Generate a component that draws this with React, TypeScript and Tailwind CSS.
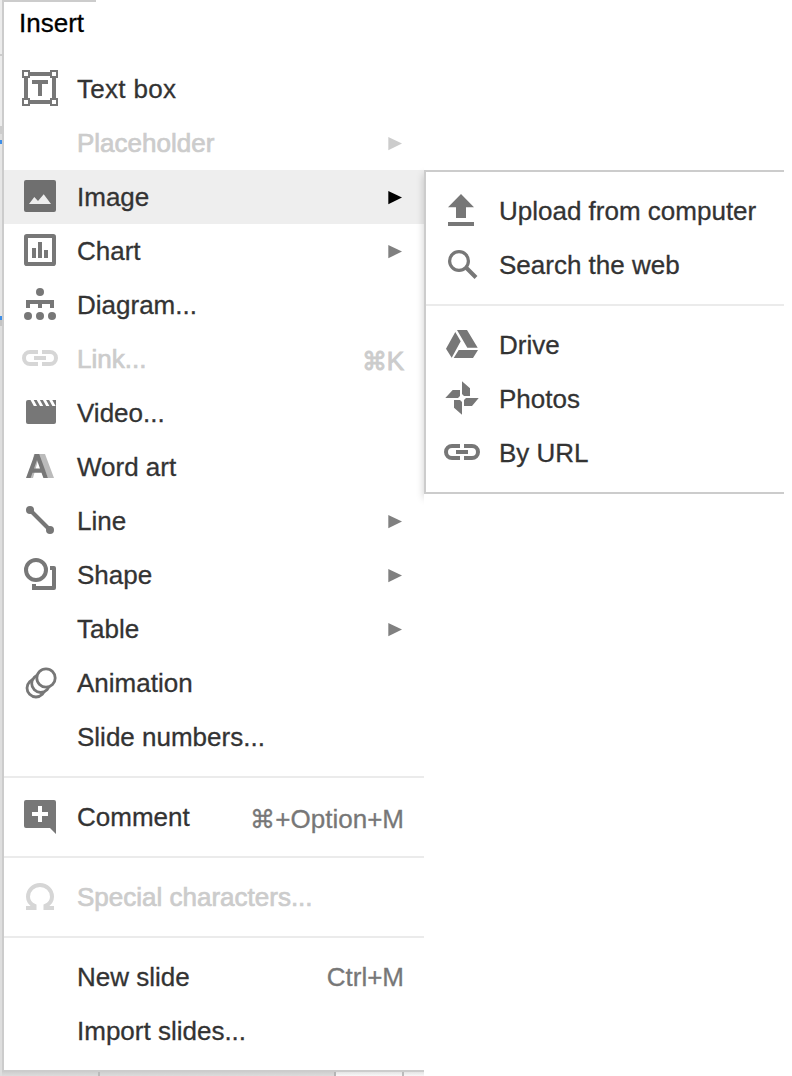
import type { ReactNode } from "react";

const LinkShape = () => (
  <>
    <path d="M16 12H8a6 6 0 0 0 0 12h8M20 12h8a6 6 0 0 1 0 12h-8" fill="none" stroke="currentColor" strokeWidth="4" />
    <path d="M12 16h12v4H12z" />
  </>
);

const icons: Record<string, ReactNode> = {
  textBox: (
    <>
      <path d="M4 4h28v28H4z" fill="none" stroke="currentColor" strokeWidth="4" />
      {[1, 29].map((x) =>
        [1, 29].map((y) => (
          <rect key={`${x}-${y}`} x={x} y={y} width="6" height="6" fill="white" stroke="currentColor" strokeWidth="2" />
        )),
      )}
      <path d="M10 10h16v4h-6v12h-4V14h-6z" />
    </>
  ),
  image: (
    <path fillRule="evenodd" d="M4 2h28a2 2 0 0 1 2 2v28a2 2 0 0 1-2 2H4a2 2 0 0 1-2-2V4a2 2 0 0 1 2-2zM7 26h22l-7.3-9.7L16 23l-3.7-4z" />
  ),
  chart: (
    <>
      <rect x="4" y="4" width="28" height="28" rx="0.8" fill="none" stroke="currentColor" strokeWidth="4" />
      <path d="M10 16h4v10h-4zM16 10h4v16h-4zM22 18h4v8h-4z" />
    </>
  ),
  diagram: (
    <>
      <circle cx="18" cy="6" r="4" />
      <circle cx="6" cy="30" r="4" />
      <circle cx="18" cy="30" r="4" />
      <circle cx="30" cy="30" r="4" />
      <path d="M4 14h28v8h-4v-4h-8v4h-4v-4H8v4H4z" />
    </>
  ),
  link: <LinkShape />,
  video: (
    <>
      <path d="M6 6h28v22a2 2 0 0 1-2 2H6a2 2 0 0 1-2-2V8a2 2 0 0 1 2-2z" />
      <path d="M8.500 6h3.200l3.300 6h-3.200zM14.700 6h3.200l3.300 6H18zM20.900 6h3.200l3.300 6h-3.200zM27.100 6h3.200l3.300 6h-3.200z" fill="white" />
    </>
  ),
  wordArt: (
    <>
      <path d="M12 6h11l9 24h-6L17 9l-6 21H8z" fill="#bbb" />
      <path fillRule="evenodd" d="M4 30 12.8 6h4.4L26 30h-4.6l-1.9-5.3h-9L8.6 30zM12 20.5h6L15 12z" />
    </>
  ),
  line: (
    <>
      <path d="M8 8l20 20" stroke="currentColor" strokeWidth="4" />
      <circle cx="8" cy="8" r="4" />
      <circle cx="28" cy="28" r="4" />
    </>
  ),
  shape: (
    <g fill="none" stroke="currentColor" strokeWidth="4">
      <circle cx="14" cy="14" r="10" />
      <path d="M28 12h4v20H10M12 32v-4" strokeLinejoin="round" />
    </g>
  ),
  animation: (
    <g fill="white" stroke="currentColor" strokeWidth="2.8">
      <circle cx="14" cy="24" r="9" />
      <circle cx="18.7" cy="19.5" r="9" />
      <circle cx="24" cy="14" r="9.2" />
    </g>
  ),
  comment: (
    <path fillRule="evenodd" d="M4 2h28a2 2 0 0 1 2 2v32l-6-6H4a2 2 0 0 1-2-2V4a2 2 0 0 1 2-2zM16 8v6h-6v4h6v6h4v-6h6v-4h-6V8z" />
  ),
  omega: (
    <path
      d="M4 30h8.5v-2.2C8.500 26 6 22.500 6 18.700a12 11.700 0 0 1 24 0C30 22.500 27.500 26 23.500 27.800V30H32"
      fill="none"
      stroke="currentColor"
      strokeWidth="4"
    />
  ),
  upload: <path d="M17 2l13 13.300h-8V26H12V15.300H4zM4 30h26v4H4z" />,
  search: (
    <g fill="none" stroke="currentColor">
      <circle cx="15" cy="15" r="9.400" strokeWidth="3.200" />
      <path d="M22 21.500l10 10" strokeWidth="4" />
    </g>
  ),
  drive: (
    <path d="M13 4h10l10.700 17.700H23.300zM11.300 6l5.400 9.300-9 16.400L2 22.700zM14.700 24H34l-5 8H9.700z" />
  ),
  photos: (
    <path d="M18 1.300l8 7V16h-6l-2-2zM1.300 18l7.400-8H16v6l-2 2zM34.700 18L28 26h-8v-6l2-2zM18 34.700l-8-7V20h6l2 2z" />
  ),
};

type Item = {
  label: string;
  icon?: string;
  shortcut?: string;
  submenu?: boolean;
  disabled?: boolean;
  active?: boolean;
  tracking?: string;
};

const mainGroups: Item[][] = [
  [
    { label: "Text box", icon: "textBox", tracking: "tracking-[0.3px]" },
    { label: "Placeholder", submenu: true, disabled: true },
    { label: "Image", icon: "image", submenu: true, active: true },
    { label: "Chart", icon: "chart", submenu: true },
    { label: "Diagram...", icon: "diagram" },
    { label: "Link...", icon: "link", shortcut: "⌘K", disabled: true },
    { label: "Video...", icon: "video" },
    { label: "Word art", icon: "wordArt" },
    { label: "Line", icon: "line", submenu: true },
    { label: "Shape", icon: "shape", submenu: true },
    { label: "Table", submenu: true },
    { label: "Animation", icon: "animation" },
    { label: "Slide numbers..." },
  ],
  [{ label: "Comment", icon: "comment", shortcut: "⌘+Option+M" }],
  [{ label: "Special characters...", icon: "omega", disabled: true }],
  [{ label: "New slide", shortcut: "Ctrl+M" }, { label: "Import slides..." }],
];

const imageGroups: Item[][] = [
  [
    { label: "Upload from computer", icon: "upload" },
    { label: "Search the web", icon: "search" },
  ],
  [
    { label: "Drive", icon: "drive" },
    { label: "Photos", icon: "photos" },
    { label: "By URL", icon: "link" },
  ],
];

function Shortcut({ keys, disabled }: { keys: string; disabled?: boolean }) {
  const hasCommand = keys.startsWith("⌘");
  return (
    <span
      className={`flex ${hasCommand ? "h-[54px] pt-0.5" : ""} ${
        disabled ? "[-webkit-text-stroke:0.9px_#ccc]" : "text-[#777] [-webkit-text-stroke:0.3px_#777]"
      }`}
    >
      {hasCommand && <span className="text-[25px]">⌘</span>}
      <span>{hasCommand ? keys.slice(1) : keys}</span>
    </span>
  );
}

function MenuRow({ item }: { item: Item }) {
  const { label, icon, shortcut, submenu, disabled, active, tracking } = item;
  const arrowColor = disabled ? "text-[#ccc]" : active ? "text-black" : "text-[#808080]";
  return (
    <div
      role="menuitem"
      className={`flex h-[54px] pr-5 pl-[18px] leading-[54px] whitespace-nowrap ${active ? "bg-[#eee]" : ""} ${
        disabled ? "text-[#ccc] [-webkit-text-stroke:0.7px_#ccc]" : "text-[#333] [-webkit-text-stroke:0.3px_#333]"
      }`}
    >
      <svg
        viewBox="0 0 36 36"
        fill="currentColor"
        className={`mt-2 mr-[19px] size-9 shrink-0 ${disabled ? "text-[#d6d6d6]" : active ? "text-[#6f6f6f]" : "text-[#777]"}`}
      >
        {icon ? icons[icon] : null}
      </svg>
      <span className={`grow ${tracking ?? ""}`}>{label}</span>
      {shortcut && <Shortcut keys={shortcut} disabled={disabled} />}
      {submenu && (
        <svg viewBox="0 0 14 14" fill="currentColor" className={`mt-[21px] mr-0.5 size-3.5 shrink-0 ${arrowColor}`}>
          <path d="M.3 0 14 6.600.3 13.200z" />
        </svg>
      )}
    </div>
  );
}

function MenuGroups({ groups }: { groups: Item[][] }) {
  return (
    <>
      {groups.map((group, i) => (
        <div key={i} className={i > 0 ? "mt-3 border-t-2 border-[#ebebeb] pt-3" : ""}>
          {group.map((item) => (
            <MenuRow key={item.label} item={item} />
          ))}
        </div>
      ))}
    </>
  );
}

export default function App() {
  return (
    <div className="relative flex h-[1076px] w-[792px] flex-col overflow-hidden bg-white font-['Liberation_Sans',Arial,sans-serif] text-[26px]">
      <div className="flex h-[1070px] w-[424px]">
        <div className="flex w-0.5 shrink-0 flex-col bg-[#dedede]">
          <div className="h-[54px] bg-[#ececec]" />
          <div className="h-0.5 bg-[#ccc]" />
          <div className="h-[70px] bg-[#ececec]" />
          <div className="h-2 bg-[#ccc]" />
          <div className="mt-[6px] h-1 bg-[#3d8ee8]" />
          <div className="h-[172px] bg-[#e6e6e6]" />
          <div className="h-1 bg-[#3d8ee8]" />
          <div className="h-1.5 bg-[#c4c4c4]" />
        </div>
        <div className="relative flex grow flex-col overflow-hidden border-l-2 border-[#ccc] bg-white">
          <div className="h-0.5 w-[92px] shrink-0 bg-[#ccc]" />
          <div className="h-[60px] shrink-0 pl-[15px] leading-[42px] text-black [-webkit-text-stroke:0.3px_#000]">Insert</div>
          <MenuGroups groups={mainGroups} />
          <div className="absolute top-[170px] left-full h-[324px] w-[360px] shadow-[0_4px_8px_rgba(0,0,0,0.2)]" />
        </div>
      </div>
      <div className="flex h-1.5 w-[424px]">
        <div className="w-0.5 bg-[#dedede]" />
        <div className="flex grow flex-col">
          <div className="h-0.5 bg-[#ccc]" />
          <div className="flex h-1 bg-linear-to-b from-[#cfcfcf] to-[#dcdcdc]">
            <div className="ml-24 h-1 w-0.5 bg-[#bbb]" />
            <div className="ml-[234px] flex h-1 grow border-l-2 border-[#b5b5b5] bg-linear-to-b from-[#e4e4e4] to-[#f8f8f8]">
              <div className="ml-[66px] h-1 w-0.5 bg-[#bbb]" />
            </div>
          </div>
        </div>
      </div>
      <div role="menu" className="absolute top-[170px] left-[424px] h-[324px] w-[360px] border-y-2 border-l-2 border-[#ccc] bg-white pt-3">
        <MenuGroups groups={imageGroups} />
      </div>
    </div>
  );
}
